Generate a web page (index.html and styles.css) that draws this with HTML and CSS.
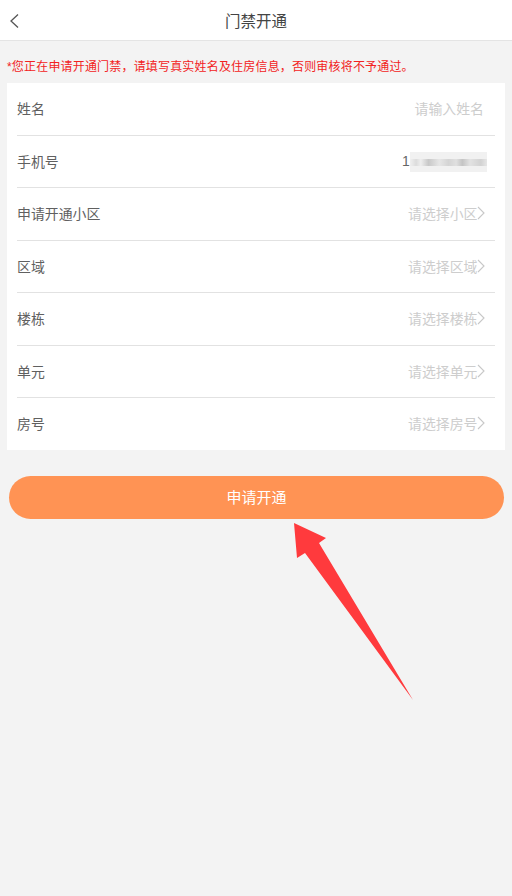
FILE: index.html
```html
<!DOCTYPE html>
<html lang="zh-CN">

<head>
  <meta charset="UTF-8">
  <meta name="viewport" content="width=device-width, initial-scale=1.0">
  <title>门禁开通</title>
  <link rel="stylesheet" href="styles.css">
</head>

<body>

  <div class="page">
    <header class="top-bar">
      <svg class="back-icon" width="10" height="16" viewBox="0 0 10 16">
        <path d="M8 1.5 L1 8 L8 14.5" fill="none" stroke="#555" stroke-width="1.3" />
      </svg>
      <div class="top-title">门禁开通</div>
    </header>

    <p class="notice">*您正在申请开通门禁，请填写真实姓名及住房信息，否则审核将不予通过。</p>

    <div class="form-card">
      <div class="form-row">
        <span class="row-label">姓名</span>
        <span class="row-hint row-hint-input">请输入姓名</span>
      </div>
      <div class="form-row">
        <span class="row-label">手机号</span>
        <div class="phone">
          <span class="phone-first">1</span>
          <div class="phone-blur"></div>
        </div>
      </div>
      <div class="form-row">
        <span class="row-label">申请开通小区</span>
        <span class="row-hint">请选择小区</span>
        <svg class="chevron" width="8" height="14" viewBox="0 0 8 14"><path d="M1 1 L7 7 L1 13" /></svg>
      </div>
      <div class="form-row">
        <span class="row-label">区域</span>
        <span class="row-hint">请选择区域</span>
        <svg class="chevron" width="8" height="14" viewBox="0 0 8 14"><path d="M1 1 L7 7 L1 13" /></svg>
      </div>
      <div class="form-row">
        <span class="row-label">楼栋</span>
        <span class="row-hint">请选择楼栋</span>
        <svg class="chevron" width="8" height="14" viewBox="0 0 8 14"><path d="M1 1 L7 7 L1 13" /></svg>
      </div>
      <div class="form-row">
        <span class="row-label">单元</span>
        <span class="row-hint">请选择单元</span>
        <svg class="chevron" width="8" height="14" viewBox="0 0 8 14"><path d="M1 1 L7 7 L1 13" /></svg>
      </div>
      <div class="form-row">
        <span class="row-label">房号</span>
        <span class="row-hint">请选择房号</span>
        <svg class="chevron" width="8" height="14" viewBox="0 0 8 14"><path d="M1 1 L7 7 L1 13" /></svg>
      </div>
    </div>

    <button class="submit-btn">申请开通</button>

    <!-- 标注箭头 -->
    <svg class="mark-arrow" width="512" height="896" viewBox="0 0 512 896">
      <polygon points="294,523 326,538 319,543 413,700 305,553 297,558" fill="#ff3a3d" />
    </svg>
  </div>

</body>
</html>
```

FILE: styles.css
```css
* {
  box-sizing: border-box;
}

body {
  margin: 0;
  background: #f3f3f3;
  font-family: "Liberation Sans", "Noto Sans CJK SC", sans-serif;
}

.page {
  position: relative;
  width: 512px;
  height: 896px;
  overflow: hidden;
}

.top-bar {
  position: relative;
  height: 41px;
  background: #fff;
  border-bottom: 1px solid #e4e4e4;
  display: flex;
  align-items: center;
  justify-content: center;
}

.back-icon {
  position: absolute;
  left: 9.5px;
  top: 13px;
}

.top-title {
  font-size: 15.5px;
  color: #444;
}

.notice {
  margin: 0;
  padding: 18px 0 0 7px;
  height: 42px;
  font-size: 12px;
  letter-spacing: 0.18px;
  line-height: 17px;
  color: #f22222;
  white-space: nowrap;
}

.form-card {
  margin: 0 7px;
  padding: 0 10px;
  background: #fff;
}

.form-row {
  height: 52.5px;
  display: flex;
  align-items: center;
  padding: 0 10px 1.5px 0;
  border-bottom: 1px solid #e2e2e2;
  font-size: 13.9px;
}

.form-row:last-child {
  height: 52px;
  padding-bottom: 2px;
  border-bottom: none;
}

.row-label {
  flex: 1;
  color: #606060;
}

.row-hint {
  color: #cdcdcd;
}

.row-hint-input {
  margin-right: 1px;
}

.chevron {
  margin-left: -0.5px;
}

.chevron path {
  fill: none;
  stroke: #c8c8c8;
  stroke-width: 1.1;
}

.phone {
  display: flex;
  align-items: center;
  margin-right: -2px;
}

.phone-first {
  color: #666;
  width: 8px;
}

.phone-blur {
  width: 77px;
  height: 20px;
  margin-top: 3px;
  background:
    linear-gradient(90deg, #f0f0f0 0%, #dcdcdc 8%, #eeeeee 14%, #c8c8c8 24%, #e6e6e6 38%, #d4d4d4 50%, #e0e0e0 60%, #c4c4c4 68%, #e2e2e2 78%, #d2d2d2 92%, #e6e6e6 100%) center / 100% 7px no-repeat,
    #f1f1f1;
}

.submit-btn {
  display: block;
  width: 495px;
  height: 43px;
  margin: 26px 0 0 9px;
  padding: 0 0 2px;
  border: none;
  border-radius: 22px;
  background: #ff9354;
  color: #fff;
  font-family: inherit;
  font-size: 15px;
}

.mark-arrow {
  position: absolute;
  left: 0;
  top: 0;
}
```
